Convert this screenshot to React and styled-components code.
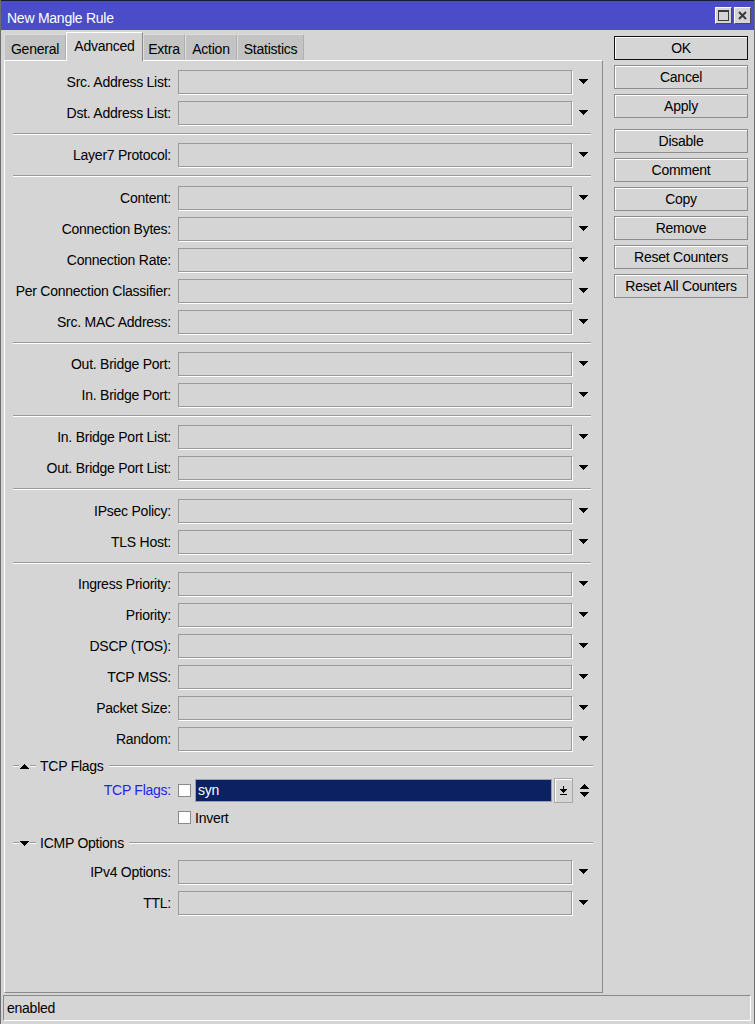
import React from 'react';
import styled, { createGlobalStyle } from 'styled-components';

const BG = '#d5d5d5';
const SHADE = '#9a9a9a';

const Global = createGlobalStyle`
  html, body { margin: 0; padding: 0; background: ${BG}; }
  body { font-family: "Liberation Sans", Arial, sans-serif; font-size: 14px; letter-spacing: -0.25px; color: #000; }
  * { box-sizing: border-box; }
`;

const Window = styled.div`
  width: 755px;
  height: 1024px;
  display: flex;
  flex-direction: column;
  background: ${BG};
  border-left: 1px solid #6e6e6e;
  border-right: 1px solid #6e6e6e;
  overflow: hidden;
`;

const TitleBar = styled.div`
  height: 30px;
  flex: none;
  display: flex;
  align-items: center;
  background: #4a4cc8;
  border-top: 1px solid #1a1a3a;
  padding: 0 3px 0 6px;
`;

const Title = styled.div`
  flex: 1;
  color: #fff;
  padding-top: 4px;
`;

const WinButtons = styled.div`
  display: flex;
  gap: 2px;
`;

const WinButton = styled.div`
  width: 17px;
  height: 17px;
  background: ${BG};
  border: 1px solid;
  border-color: #fff #4a4a4a #4a4a4a #fff;
  display: flex;
  align-items: center;
  justify-content: center;
`;

const Body = styled.div`
  flex: 1;
  display: flex;
  padding-top: 2px;
  min-height: 0;
`;

const LeftCol = styled.div`
  margin-left: 3px;
  width: 599px;
  display: flex;
  flex-direction: column;
`;

const Tabs = styled.div`
  height: 28px;
  display: flex;
  align-items: flex-end;
  position: relative;
  z-index: 1;
`;

const Tab = styled.div`
  width: ${p => p.$w}px;
  height: ${p => (p.$active ? 29 : 26)}px;
  margin-bottom: ${p => (p.$active ? -1 : 0)}px;
  display: flex;
  align-items: ${p => (p.$active ? 'flex-start' : 'center')};
  justify-content: center;
  padding-top: ${p => (p.$active ? 5 : 3)}px;
  background: ${p => (p.$active ? BG : '#c3c3c3')};
  border: 1px solid;
  border-bottom: none;
  border-color: ${p => (p.$active ? '#fff #8a8a8a transparent #fff' : '#dcdcdc #b0b0b0 transparent #dcdcdc')};
  white-space: nowrap;
`;

const Panel = styled.div`
  flex: 1;
  border: 1px solid;
  border-color: #fff #8a8a8a #8a8a8a #fff;
  padding-top: 5px;
  display: flex;
  flex-direction: column;
`;

const Row = styled.div`
  display: flex;
  align-items: center;
  height: ${p => p.$h || 31}px;
  flex: none;
`;

const Label = styled.div`
  width: 166px;
  margin-right: 7px;
  text-align: right;
  white-space: nowrap;
  color: ${p => (p.$blue ? '#2424e6' : '#000')};
`;

const Field = styled.div`
  width: 394px;
  height: 24px;
  border: 1px solid ${SHADE};
  box-shadow: 1px 1px 0 #fff;
  background: ${BG};
`;

const ArrowCell = styled.div`
  width: 23px;
  display: flex;
  justify-content: center;
  align-items: center;
`;

const Separator = styled.div`
  height: ${p => p.$h}px;
  flex: none;
  display: flex;
  align-items: center;
  padding: 0 11px 0 8px;
`;

const Line = styled.div`
  flex: ${p => (p.$w ? 'none' : 1)};
  width: ${p => (p.$w ? `${p.$w}px` : 'auto')};
  height: 2px;
  border-top: 1px solid ${SHADE};
  border-bottom: 1px solid #fff;
`;

const SectionHead = styled.div`
  height: ${p => p.$h}px;
  margin-bottom: ${p => p.$mb || 0}px;
  flex: none;
  display: flex;
  align-items: center;
  padding: 0 9px 0 8px;
`;

const SectionTitle = styled.span`
  margin: 0 5px 0 4px;
  white-space: nowrap;
`;

const TriWrap = styled.span`
  display: flex;
  margin: 0 1px;
`;

const CheckBox = styled.div`
  width: 13px;
  height: 13px;
  background: #fff;
  border: 1px solid #8a8a8a;
  flex: none;
`;

const SelectField = styled.div`
  width: 357px;
  height: 23px;
  margin-left: 4px;
  background: #0b2162;
  border: 1px solid #9aa0b0;
  color: #fff;
  padding-left: 2px;
  display: flex;
  align-items: center;
`;

const SmallBtn = styled.div`
  width: 19px;
  height: 25px;
  margin-left: 2px;
  background: ${BG};
  border: 1px solid #a8a8a8;
  box-shadow: inset 1px 1px 0 #fff;
  display: flex;
  align-items: center;
  justify-content: center;
`;

const CheckLabel = styled.span`
  margin-left: 4px;
`;

const Spacer = styled.div`
  width: 173px;
  flex: none;
`;

const RightCol = styled.div`
  margin-left: 11px;
  margin-top: 4px;
  width: 134px;
  display: flex;
  flex-direction: column;
`;

const Button = styled.button`
  width: 134px;
  height: 24px;
  margin-top: ${p => p.$mt}px;
  padding: 0;
  font-family: "Liberation Sans", Arial, sans-serif;
  font-size: 14px;
  letter-spacing: -0.25px;
  color: #000;
  background: ${BG};
  border: 1px solid ${p => (p.$default ? '#111' : '#8c8c8c')};
  box-shadow: inset 1px 1px 0 #fff;
  white-space: nowrap;
`;

const StatusBar = styled.div`
  height: 26px;
  margin: 2px 3px 3px 2px;
  border: 1px solid;
  border-color: #8a8a8a #fff #fff #8a8a8a;
  display: flex;
  align-items: center;
  padding-left: 3px;
  flex: none;
`;

const DownArrow = () => (
  <svg width="9" height="5" viewBox="0 0 9 5" shapeRendering="crispEdges">
    <polygon points="0,0 9,0 4.5,5" fill="#000" />
  </svg>
);

const UpArrow = () => (
  <svg width="9" height="5" viewBox="0 0 9 5" shapeRendering="crispEdges">
    <polygon points="0,5 9,5 4.5,0" fill="#000" />
  </svg>
);

const UpDown = () => (
  <svg width="11" height="13" viewBox="0 0 11 13" shapeRendering="crispEdges">
    <polygon points="0,5 11,5 5.5,0" fill="#000" />
    <polygon points="0,8 11,8 5.5,13" fill="#000" />
  </svg>
);

const DropToBar = () => (
  <svg width="7" height="9" viewBox="0 0 7 9" shapeRendering="crispEdges">
    <rect x="3" y="0" width="1" height="3" fill="#000" />
    <polygon points="0,3 7,3 3.5,7" fill="#000" />
    <rect x="0" y="8" width="7" height="1" fill="#000" />
  </svg>
);

const MaxIcon = () => (
  <svg width="11" height="11" viewBox="0 0 11 11" shapeRendering="crispEdges">
    <rect x="0.5" y="0.5" width="10" height="10" fill="none" stroke="#3a3a3a" />
    <rect x="1" y="1" width="9" height="1" fill="#3a3a3a" />
  </svg>
);

const CloseIcon = () => (
  <svg width="9" height="9" viewBox="0 0 9 9">
    <path d="M1 1 L8 8 M8 1 L1 8" stroke="#3a3a3a" strokeWidth="2" />
  </svg>
);

const tabs = [
  { name: 'General', w: 62 },
  { name: 'Advanced', w: 77, active: true },
  { name: 'Extra', w: 42 },
  { name: 'Action', w: 52 },
  { name: 'Statistics', w: 67 },
];

const groups = [
  { sep: 0, rows: ['Src. Address List', 'Dst. Address List'] },
  { sep: 11, rows: ['Layer7 Protocol'] },
  { sep: 12, rows: ['Content', 'Connection Bytes', 'Connection Rate', 'Per Connection Classifier', 'Src. MAC Address'] },
  { sep: 11, rows: ['Out. Bridge Port', 'In. Bridge Port'] },
  { sep: 11, rows: ['In. Bridge Port List', 'Out. Bridge Port List'] },
  { sep: 12, rows: ['IPsec Policy', 'TLS Host'] },
  { sep: 11, rows: ['Ingress Priority', 'Priority', 'DSCP (TOS)', 'TCP MSS', 'Packet Size', 'Random'] },
];

const buttons = [
  { label: 'OK', def: true, mt: 0 },
  { label: 'Cancel', mt: 5 },
  { label: 'Apply', mt: 5 },
  { label: 'Disable', mt: 11 },
  { label: 'Comment', mt: 5 },
  { label: 'Copy', mt: 5 },
  { label: 'Remove', mt: 5 },
  { label: 'Reset Counters', mt: 5 },
  { label: 'Reset All Counters', mt: 5 },
];

const FieldRow = ({ label }) => (
  <Row>
    <Label>{label}:</Label>
    <Field />
    <ArrowCell><DownArrow /></ArrowCell>
  </Row>
);

const Section = ({ title, open, h, mb }) => (
  <SectionHead $h={h} $mb={mb}>
    <Line $w={6} />
    <TriWrap>{open ? <UpArrow /> : <DownArrow />}</TriWrap>
    <Line $w={6} />
    <SectionTitle>{title}</SectionTitle>
    <Line />
  </SectionHead>
);

export default function App() {
  return (
    <>
      <Global />
      <Window>
        <TitleBar>
          <Title>New Mangle Rule</Title>
          <WinButtons>
            <WinButton><MaxIcon /></WinButton>
            <WinButton><CloseIcon /></WinButton>
          </WinButtons>
        </TitleBar>
        <Body>
          <LeftCol>
            <Tabs>
              {tabs.map(t => (
                <Tab key={t.name} $w={t.w} $active={t.active}>{t.name}</Tab>
              ))}
            </Tabs>
            <Panel>
              {groups.map((g, i) => (
                <React.Fragment key={i}>
                  {g.sep > 0 && <Separator $h={g.sep}><Line /></Separator>}
                  {g.rows.map(r => <FieldRow key={r} label={r} />)}
                </React.Fragment>
              ))}
              <Section title="TCP Flags" open h={24} />
              <Row $h={24}>
                <Label $blue>TCP Flags:</Label>
                <CheckBox />
                <SelectField>syn</SelectField>
                <SmallBtn><DropToBar /></SmallBtn>
                <ArrowCell><UpDown /></ArrowCell>
              </Row>
              <Row $h={31}>
                <Spacer />
                <CheckBox />
                <CheckLabel>Invert</CheckLabel>
              </Row>
              <Section title="ICMP Options" h={20} mb={3} />
              <FieldRow label="IPv4 Options" />
              <FieldRow label="TTL" />
            </Panel>
          </LeftCol>
          <RightCol>
            {buttons.map(b => (
              <Button key={b.label} $default={b.def} $mt={b.mt}>{b.label}</Button>
            ))}
          </RightCol>
        </Body>
        <StatusBar>enabled</StatusBar>
      </Window>
    </>
  );
}
